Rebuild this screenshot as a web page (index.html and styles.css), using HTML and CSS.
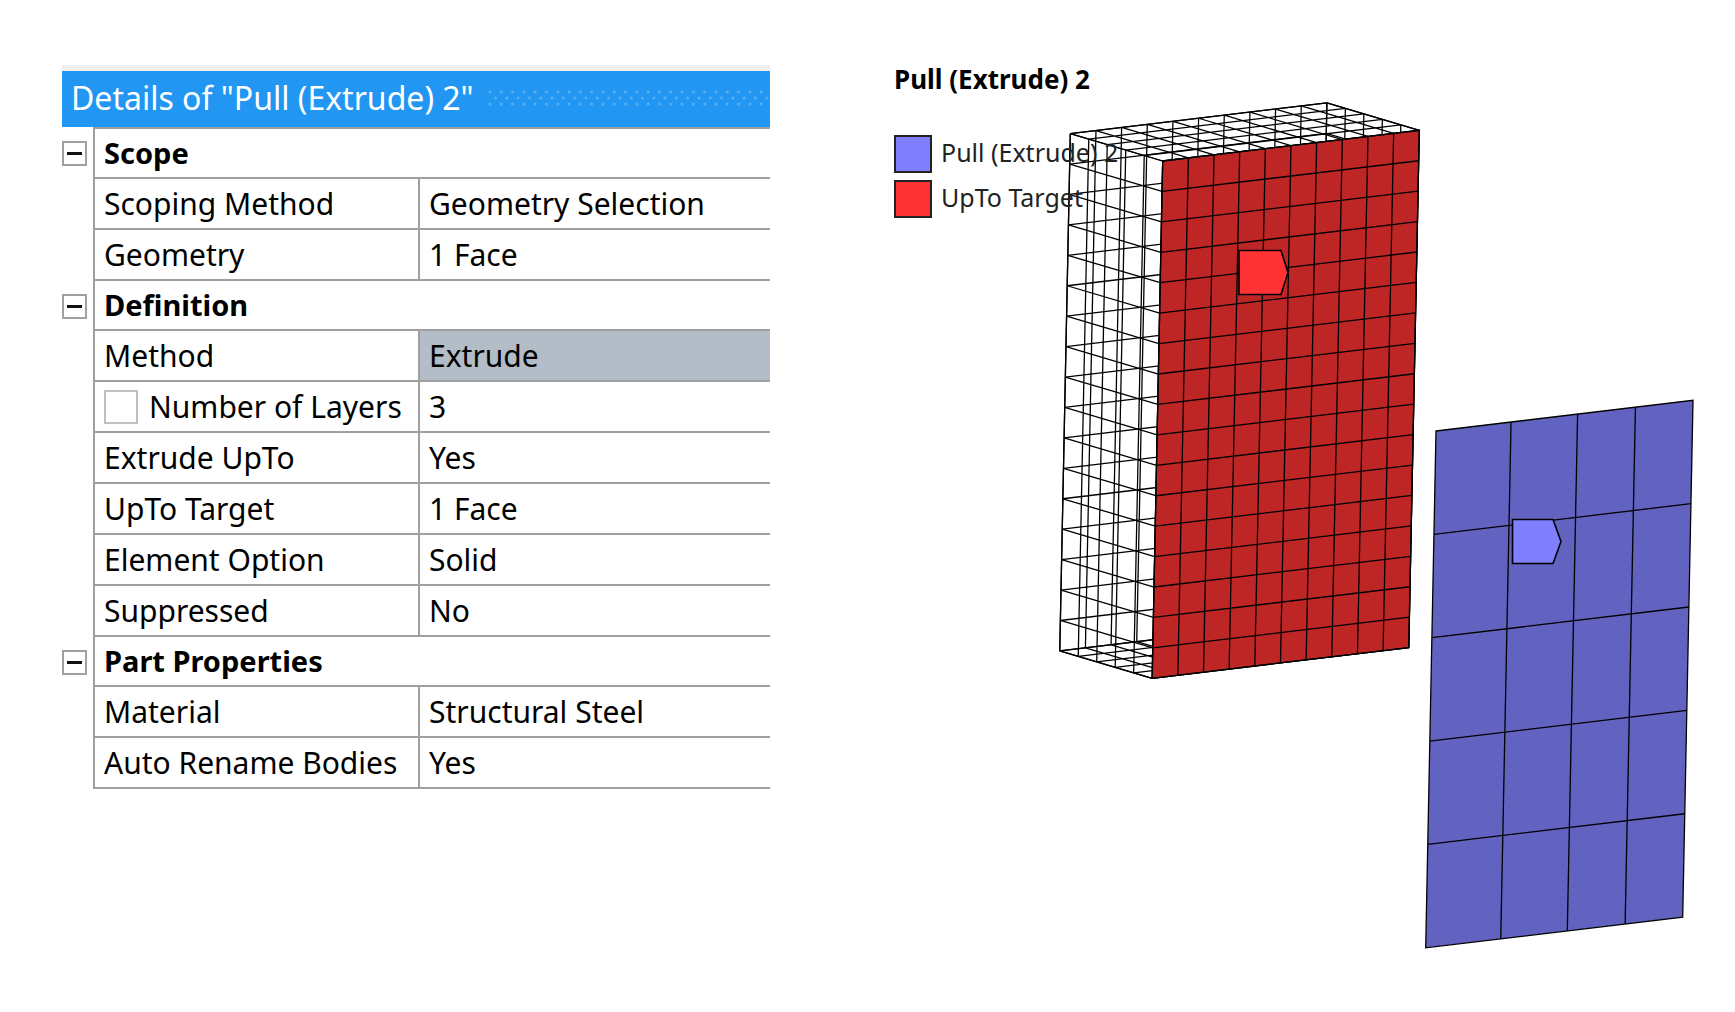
FILE: index.html
```html
<!DOCTYPE html>
<html lang="en">
<head>
<meta charset="utf-8">
<title>Details of "Pull (Extrude) 2"</title>
<link rel="stylesheet" href="styles.css">
</head>
<body>
<main class="workspace">
  <section class="details">
    <header class="details-bar">
      <h1 class="details-title">Details of "Pull (Extrude) 2"</h1>
      <svg class="grip" aria-hidden="true">
        <defs>
          <pattern id="dots" width="11.3" height="12" patternUnits="userSpaceOnUse">
            <circle cx="2" cy="2" r="1.5"/><circle cx="7.6" cy="8" r="1.5"/>
          </pattern>
        </defs>
        <rect width="100%" height="16" fill="url(#dots)"/>
      </svg>
    </header>
    <table class="props">
      <colgroup><col class="col-gutter"><col class="col-name"><col></colgroup>
      <tbody>
        <tr class="group"><td class="gutter"><button class="toggle" aria-label="Collapse Scope"></button></td><th colspan="2" scope="rowgroup">Scope</th></tr>
        <tr><td class="gutter"></td><th scope="row">Scoping Method</th><td>Geometry Selection</td></tr>
        <tr><td class="gutter"></td><th scope="row">Geometry</th><td>1 Face</td></tr>
      </tbody>
      <tbody>
        <tr class="group"><td class="gutter"><button class="toggle" aria-label="Collapse Definition"></button></td><th colspan="2" scope="rowgroup">Definition</th></tr>
        <tr><td class="gutter"></td><th scope="row">Method</th><td class="readonly">Extrude</td></tr>
        <tr><td class="gutter"></td><th scope="row"><label class="check"><input type="checkbox">Number of Layers</label></th><td>3</td></tr>
        <tr><td class="gutter"></td><th scope="row">Extrude UpTo</th><td>Yes</td></tr>
        <tr><td class="gutter"></td><th scope="row">UpTo Target</th><td>1 Face</td></tr>
        <tr><td class="gutter"></td><th scope="row">Element Option</th><td>Solid</td></tr>
        <tr><td class="gutter"></td><th scope="row">Suppressed</th><td>No</td></tr>
      </tbody>
      <tbody>
        <tr class="group"><td class="gutter"><button class="toggle" aria-label="Collapse Part Properties"></button></td><th colspan="2" scope="rowgroup">Part Properties</th></tr>
        <tr><td class="gutter"></td><th scope="row">Material</th><td>Structural Steel</td></tr>
        <tr><td class="gutter"></td><th scope="row">Auto Rename Bodies</th><td>Yes</td></tr>
      </tbody>
    </table>
  </section>

  <section class="viewer">
    <svg class="model" viewBox="770 0 965 1012" role="img" aria-label="Mesh of the extruded body and its source face">
      <defs>
        <path class="mesh" id="rows10" d="M0 0H10M0 1H10M0 2H10M0 3H10M0 4H10M0 5H10M0 6H10M0 7H10M0 8H10M0 9H10M0 10H10M0 11H10M0 12H10M0 13H10M0 14H10M0 15H10M0 16H10M0 17H10M0 0V17M1 0V17M2 0V17M3 0V17M4 0V17M5 0V17M6 0V17M7 0V17M8 0V17M9 0V17M10 0V17"/>
        <path class="mesh" id="rows5" d="M0 0H5M0 1H5M0 2H5M0 3H5M0 4H5M0 5H5M0 6H5M0 7H5M0 8H5M0 9H5M0 10H5M0 11H5M0 12H5M0 13H5M0 14H5M0 15H5M0 16H5M0 17H5M0 0V17M1 0V17M2 0V17M3 0V17M4 0V17M5 0V17"/>
        <path class="mesh" id="cap" d="M0 0H10M0 1H10M0 2H10M0 3H10M0 4H10M0 5H10M0 0V5M1 0V5M2 0V5M3 0V5M4 0V5M5 0V5M6 0V5M7 0V5M8 0V5M9 0V5M10 0V5"/>
      </defs>
      <g class="wire">
        <!-- back, left, right, top and bottom sides of the block -->
        <use href="#rows10" transform="matrix(25.66 -3.07 -.62 30.43 1070.3 133.6)"/>
        <use href="#rows5" transform="matrix(18.48 5.48 -.62 30.43 1070.3 133.6)"/>
        <use href="#rows5" transform="matrix(18.48 5.48 -.62 30.43 1326.9 102.9)"/>
        <use href="#cap" transform="matrix(25.66 -3.07 18.48 5.48 1070.3 133.6)"/>
        <use href="#cap" transform="matrix(25.66 -3.07 18.48 5.48 1059.8 650.9)"/>
        <!-- target face -->
        <path class="target" d="M1162.7 161L1419.3 130.3L1408.8 647.6L1152.2 678.3Z"/>
        <use href="#rows10" transform="matrix(25.66 -3.07 -.62 30.43 1162.7 161)"/>
        <!-- source face -->
        <path class="source" d="M1436 431L1693 400.3L1682.7 917.1L1425.7 947.8Z"/>
        <path class="mesh" transform="matrix(257 -30.7 -2.06 103.36 1436 431)" d="M0 1H1M0 2H1M0 3H1M0 4H1M.292 0V5M.551 0V5M.776 0V5"/>
      </g>
      <path class="tag tag-target" d="M1239 250.5H1281L1288 272.5L1281 294.5H1239Z"/>
      <path class="tag tag-source" d="M1512.5 519.5H1553L1561 541.5L1553 563.5H1512.5Z"/>
    </svg>
    <div class="legend">
      <h2 class="legend-title">Pull (Extrude) 2</h2>
      <ul class="legend-list">
        <li><span class="swatch swatch-source"></span><span class="legend-label">Pull (Extrude) 2</span></li>
        <li><span class="swatch swatch-target"></span><span class="legend-label">UpTo Target</span></li>
      </ul>
    </div>
  </section>
</main>
</body>
</html>
```
FILE: styles.css
```css
* { box-sizing: border-box; }

body {
  margin: 0;
  background: #fff;
  color: #000;
  font-family: "Noto Sans", "Open Sans", sans-serif;
}

.workspace {
  display: grid;
  grid-template-columns: minmax(0, 708fr) minmax(0, 965fr);
  align-items: start;
  padding-left: 62px;
}

.details { padding-top: 65px; }

.details-bar {
  display: flex;
  align-items: center;
  gap: 14px;
  height: 62px;
  padding: 0 0 2px 9px;
  border-top: 6px solid #f0eeee;
  background: #2196f3;
  color: #fff;
}

.details-title {
  margin: 0;
  font-size: 32px;
  font-weight: 400;
  line-height: 40px;
  white-space: nowrap;
}

.grip {
  flex: 1;
  min-width: 0;
  height: 16px;
  fill: #5fb0ea;
}

.props {
  width: 100%;
  table-layout: fixed;
  border-collapse: separate;
  border-spacing: 0;
  font-size: 30px;
  line-height: 40px;
}

.col-gutter { width: 31px; }
.col-name { width: 325px; }

.props th,
.props td {
  height: 51px;
  padding: 0 0 0 9px;
  border: solid #a0a0a0;
  border-width: 0 0 2px 2px;
  font-weight: 400;
  text-align: left;
  white-space: nowrap;
}

.props .group th {
  height: 50px;
  font-size: 29px;
  font-weight: 700;
}

.props .group .gutter { height: 50px; }

.props tbody:first-of-type .group th {
  height: 52px;
  border-top-width: 2px;
}

.props .gutter {
  padding: 0;
  border: 0;
}

.props .readonly { background: #b2bdc7; }

.toggle {
  display: flex;
  align-items: center;
  justify-content: center;
  width: 25px;
  height: 25px;
  padding: 0;
  border: 2px solid #a0a0a0;
  background: #fff;
}

.toggle::before {
  content: "";
  width: 15px;
  height: 3px;
  background: #111;
}

.check {
  display: flex;
  align-items: center;
  gap: 11px;
}

.check input {
  appearance: none;
  width: 34px;
  height: 34px;
  margin: 0;
  border: 2px solid #c0c0c0;
  background: #fff;
}

.viewer { position: relative; }

.model {
  display: block;
  width: 100%;
  height: auto;
}

.wire {
  fill: none;
  stroke: #000;
  stroke-width: 1.3;
}

.mesh { vector-effect: non-scaling-stroke; }

.target { fill: #be2626; }
.source { fill: #6262c0; }

.tag {
  stroke: #000;
  stroke-width: 1.6;
}

.tag-target { fill: #ff3333; }
.tag-source { fill: #8080ff; }

.legend {
  position: absolute;
  top: 59px;
  left: 124px;
}

.legend-title {
  margin: 0;
  font-size: 26px;
  font-weight: 700;
  line-height: 40px;
}

.legend-list {
  display: grid;
  gap: 7px;
  margin: 0;
  padding: 36px 0 0;
  list-style: none;
  color: #222;
  font-size: 25px;
  line-height: 34px;
}

.legend-list li {
  display: flex;
  align-items: flex-start;
  gap: 9px;
}

.swatch {
  width: 38px;
  height: 38px;
  border: 2px solid #222;
}

.swatch-source { background: #8080ff; }
.swatch-target { background: #ff3333; }
```
